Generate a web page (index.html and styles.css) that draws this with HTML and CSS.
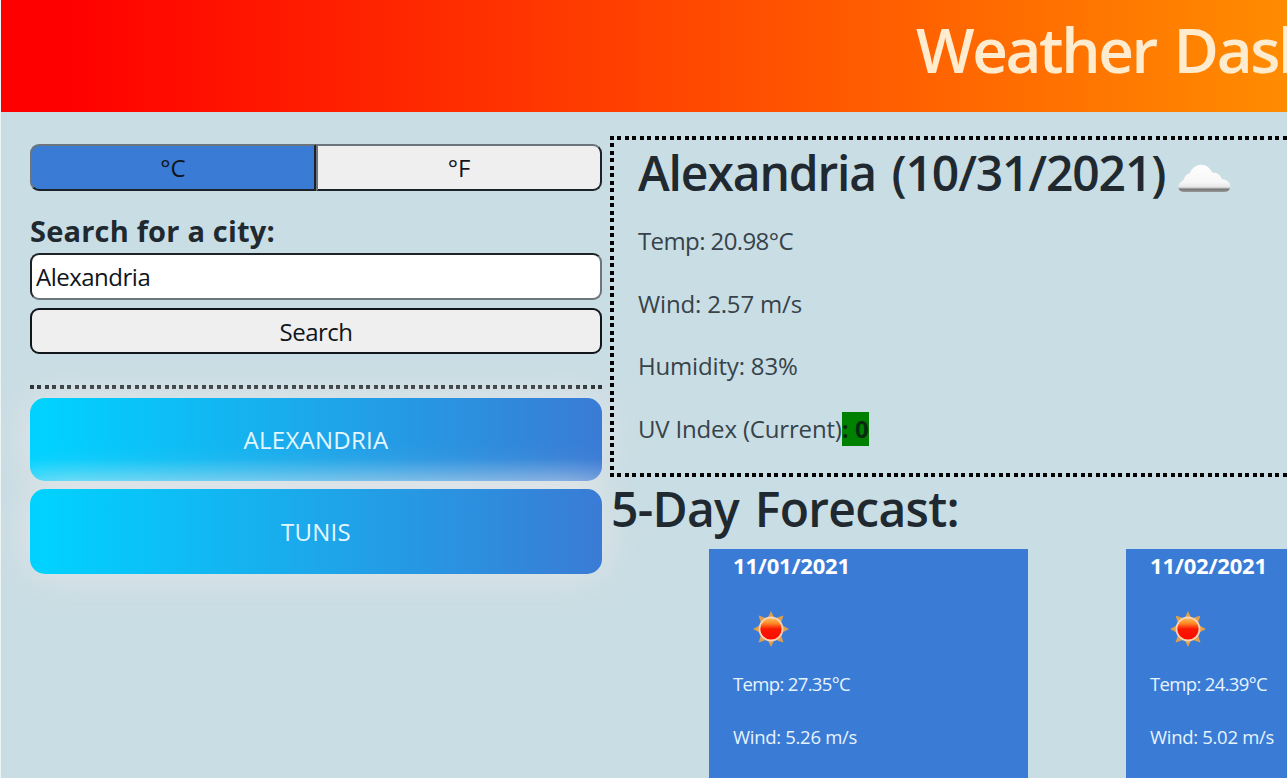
FILE: index.html
```html
<!DOCTYPE html>
<html lang="en">
<head>
<meta charset="utf-8">
<title>Weather Dashboard</title>
<link rel="stylesheet" href="styles.css">
</head>
<body>
<svg class="defs" width="0" height="0" aria-hidden="true">
  <defs>
    <linearGradient id="cloudFill" x1="0" y1="0" x2="0" y2="1">
      <stop offset="0" stop-color="#fff"/><stop offset=".65" stop-color="#f6f6f6"/><stop offset=".82" stop-color="#e6e6e6"/><stop offset=".9" stop-color="#777"/><stop offset="1" stop-color="#999"/>
    </linearGradient>
    <linearGradient id="sunFill" x1="0" y1="0" x2="0" y2="1">
      <stop offset="0" stop-color="#ffc05a"/><stop offset=".25" stop-color="#ff8a28"/><stop offset=".5" stop-color="#f81800"/><stop offset="1" stop-color="#ff0a00"/>
    </linearGradient>
    <symbol id="sun" viewBox="0 0 38 38">
      <path fill="#e0a04c" d="M19 1l3.500 7.500 9-3-3 9L37 19l-8.500 4.500 3 9-9-3L19 37l-3.500-7.500-9 3 3-9L1 19l8.500-4.500-3-9 9 3z"/>
      <circle cx="19" cy="19" r="11.500" fill="url(#sunFill)" stroke="#f8d3b4" stroke-width="1.800"/>
    </symbol>
  </defs>
</svg>
<header class="banner"><h1 class="banner-title">Weather Dashboard</h1></header>
<main class="layout">
  <aside class="sidebar">
    <div class="units">
      <button class="unit unit-active">°C</button><button class="unit">°F</button>
    </div>
    <label class="search-label" for="city">Search for a city:</label>
    <input class="search-input" id="city" type="text" value="Alexandria">
    <button class="search-button">Search</button>
    <div class="history">
      <button class="city city-focus">ALEXANDRIA</button>
      <button class="city">TUNIS</button>
    </div>
  </aside>
  <div class="content">
    <section class="today">
      <h2 class="today-title"><span>Alexandria (10/31/2021)</span>
        <svg class="cloud" viewBox="0 0 56 32"><path fill="url(#cloudFill)" d="M7 30C1 30 0 24 3 21c2-2 3-2 4-4 1-4 4-5 6-6C16 3 26 0 32 6c2 2 3 4 4 5 4-1 7 2 9 6 7 1 9 5 8 9-1 3-3 4-6 4z"/></svg>
      </h2>
      <p class="fact fact-temp">Temp: 20.98°C</p>
      <p class="fact">Wind: 2.57 m/s</p>
      <p class="fact">Humidity: 83%</p>
      <p class="fact">UV Index (Current)<b class="uv">: 0</b></p>
    </section>
    <h2 class="forecast-title">5-Day Forecast:</h2>
    <div class="forecast">
      <article class="day">
        <h3 class="day-date">11/01/2021</h3>
        <svg class="sun"><use href="#sun"/></svg>
        <p class="day-fact day-temp">Temp: 27.35°C</p>
        <p class="day-fact">Wind: 5.26 m/s</p>
      </article>
      <article class="day">
        <h3 class="day-date">11/02/2021</h3>
        <svg class="sun"><use href="#sun"/></svg>
        <p class="day-fact day-temp">Temp: 24.39°C</p>
        <p class="day-fact">Wind: 5.02 m/s</p>
      </article>
    </div>
  </div>
</main>
</body>
</html>
```
FILE: styles.css
```css
* { box-sizing: border-box; margin: 0; }
html { overflow: hidden; }
body {
  width: 1287px; height: 778px; overflow: hidden;
  background: #c9dde4; color: #212930;
  border-left: 1px solid #eef4f6;
  font-family: "Open Sans", "Noto Sans", sans-serif;
  font-size: 24px;
}
.defs { display: block; }
button, input { font: inherit; color: #10151a; }
.banner {
  height: 112px; overflow: hidden; padding: 7px 0 0 915px;
  background: linear-gradient(90deg, #f00 0, #f00 60px, #ff8c00 1286px);
}
.banner-title { font-size: 62px; line-height: 85px; font-weight: 600; letter-spacing: -2.4px; word-spacing: 4px; color: #ffebcd; white-space: nowrap; }
.layout { display: flex; }
.sidebar { width: 601px; padding: 32px 0 0 29px; flex: none; display: flex; flex-direction: column; }
.units { display: flex; width: 572px; height: 47px; }
.unit {
  flex: 1; padding: 0; border: 2.500px solid; border-color: #6b757b #1b2228 #1b2228 #6b757b;
  background: #efefef; border-radius: 0 9px 9px 0;
}
.unit-active { background: #3a7bd5; border-radius: 9px 0 0 9px; }
.search-label { margin-top: 19px; margin-bottom: 1px; font-size: 29px; line-height: 42px; font-weight: 700; letter-spacing: .2px; white-space: nowrap; }
.search-input {
  width: 572px; height: 47px; padding: 0 4px; background: #fff; letter-spacing: -.5px;
  border: 2px solid; border-color: #1b2228 #6b757b #6b757b #1b2228; border-radius: 9px;
}
.search-button { width: 572px; height: 46px; margin-top: 8px; padding: 0; letter-spacing: -.5px; background: #efefef; border: 2px solid #10151a; border-radius: 9px; }
.history {
  width: 572px; margin-top: 31px; padding-top: 13px; display: flex; flex-direction: column; gap: 8px;
  background: repeating-linear-gradient(90deg, #171d20 0 4px, transparent 4px 7.474px) 0 0 / 100% 4px no-repeat;
}
.city {
  height: 83px; padding: 0; border: 0; border-radius: 15px; color: #e4f7ff; letter-spacing: .25px;
  background: linear-gradient(90deg, #00d2ff 2%, #3a7bd5 100%);
  box-shadow: 0 0 42px rgba(238,234,234,.75);
}
.city-focus { background: linear-gradient(0deg, rgba(238,238,238,.24), transparent 27%), linear-gradient(90deg, #00d2ff 2%, #3a7bd5); }
.city:last-child { height: 85px; }
.content { width: 685px; flex: none; padding: 24px 0 0 8px; overflow: hidden; }
.today {
  height: 341px; padding: 4px 0 0 28px;
  background:
    repeating-linear-gradient(90deg, #000 0 4px, transparent 4px 7.474px) 0 0 / 100% 4px no-repeat,
    repeating-linear-gradient(90deg, #000 0 4px, transparent 4px 7.474px) 0 100% / 100% 4px no-repeat,
    repeating-linear-gradient(180deg, #000 0 4px, transparent 4px 7.489px) 0 0 / 4px 100% no-repeat;
}
.today-title { display: flex; font-size: 48px; line-height: 66px; font-weight: 600; letter-spacing: -1.13px; word-spacing: 4px; white-space: nowrap; }
.cloud { width: 56px; height: 32px; margin: 22px 0 0 12px; }
.fact { line-height: 34px; margin-bottom: 28.500px; letter-spacing: -.17px; color: #37434a; white-space: nowrap; }
.fact-temp { margin-top: 18px; letter-spacing: -.6px; }
.uv { display: inline-block; background: green; color: #0c2a12; letter-spacing: .1px; }
.forecast-title { font-size: 48px; line-height: 64px; font-weight: 600; letter-spacing: -.7px; word-spacing: 4px; padding-left: 1px; white-space: nowrap; }
.forecast { display: flex; gap: 98px; padding-left: 99px; margin-top: 8px; }
.day { width: 319px; height: 320px; flex: none; background: #3a7bd5; padding-left: 24px; color: #e6f4ff; }
.day-date { font-size: 22px; line-height: 32px; font-weight: 700; letter-spacing: -.2px; color: #fff; }
.sun { display: block; width: 38px; height: 38px; margin: 29px 0 0 19px; }
.day-fact { font-size: 18.500px; line-height: 26px; margin-bottom: 26.500px; letter-spacing: -.3px; white-space: nowrap; }
.day-temp { margin-top: 23px; letter-spacing: -.65px; }
```
